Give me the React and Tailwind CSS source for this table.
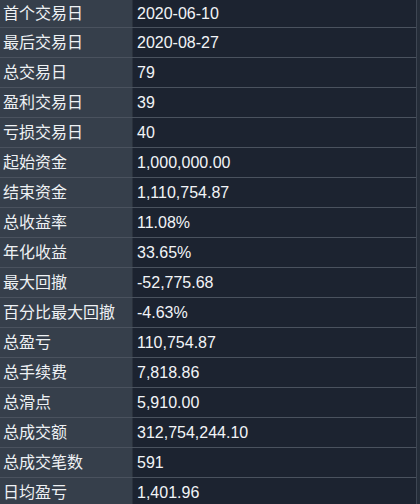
import React from 'react';

const rows = [
  ['首个交易日', '2020-06-10'],
  ['最后交易日', '2020-08-27'],
  ['总交易日', '79'],
  ['盈利交易日', '39'],
  ['亏损交易日', '40'],
  ['起始资金', '1,000,000.00'],
  ['结束资金', '1,110,754.87'],
  ['总收益率', '11.08%'],
  ['年化收益', '33.65%'],
  ['最大回撤', '-52,775.68'],
  ['百分比最大回撤', '-4.63%'],
  ['总盈亏', '110,754.87'],
  ['总手续费', '7,818.86'],
  ['总滑点', '5,910.00'],
  ['总成交额', '312,754,244.10'],
  ['总成交笔数', '591'],
  ['日均盈亏', '1,401.96'],
];

export default function App() {
  return <div className="w-[420px] h-[504px] overflow-hidden bg-[#1c2330] flex" style={{ fontFamily: '"Liberation Sans", "Noto Sans CJK SC", sans-serif' }}>
      <div className="w-[417px] border-r border-[#3e4653] flex flex-col">
        {rows.map(([label, value], i) => <div key={label} className={i === 0 ? "flex h-[28px] shrink-0 border-b border-[#4a525e]" : "flex h-[30px] shrink-0 border-b border-[#4a525e]"}>
            <div className="w-[133px] shrink-0 bg-[#363f4b] border-r border-[#2a313c] pl-[3px] flex items-center text-[16px] text-[#eef1f4]">
              {label}
            </div>
            <div className="flex-1 pl-[4px] flex items-center text-[16px] text-[#f2f4f7]">
              {value}
            </div>
          </div>)}
      </div>
      <div className="flex-1 bg-[#252d39]" />
    </div>;
}
